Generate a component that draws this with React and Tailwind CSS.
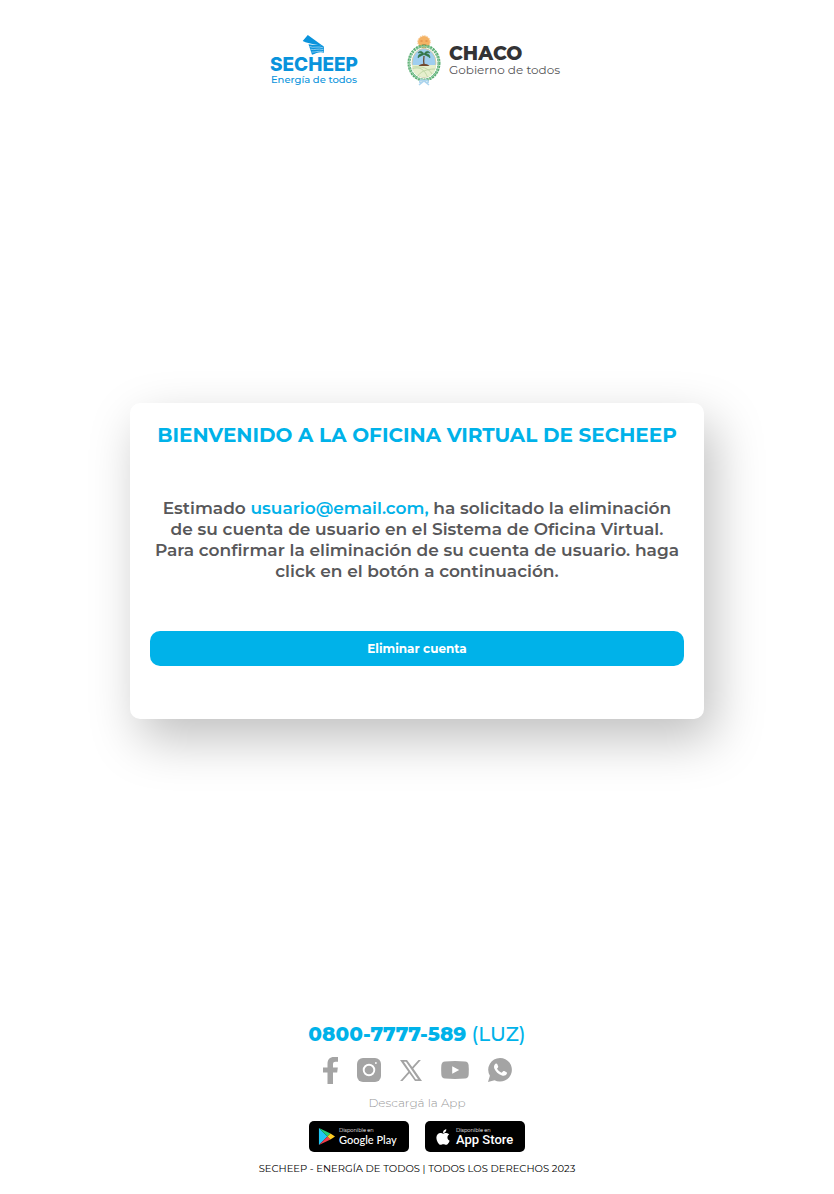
import React from "react";
import { FaApple } from "react-icons/fa";

function BirdMark() {
  return (
    <svg viewBox="0 0 24 21" className="h-[21px] w-6" aria-hidden="true">
      <path d="M.7 6 5.800 0 22 11.800C17 9 8 9.500 .7 6Z" fill="#0993dc" />
      <path d="M6.500 9.300c5 1 11-.6 15.500 2.500v6c-4-1.500-8 .5-12 2Z" fill="#0993dc" />
      <path d="M7.500 11.500c4 2 8-.8 14 1.400M8.500 14.200c4 1.300 7-1.200 13 .5M9.500 17c4 .5 6-1.600 12-.3" fill="none" stroke="#fff" strokeWidth=".5" />
    </svg>
  );
}

function ChacoShield() {
  return (
    <svg viewBox="0 0 34 52" className="h-[52px] w-[34px]" aria-hidden="true">
      <circle cx="17" cy="7" r="6" fill="#f4b264" />
      <circle cx="17" cy="7" r="6.200" fill="none" stroke="#f6bd78" strokeWidth="1" strokeDasharray="1.400 1" />
      <path d="M13.500 6h2M18.500 6h2M15.500 9.500h3" stroke="#d87b35" strokeWidth=".9" />
      <ellipse cx="17" cy="28" rx="15" ry="17" fill="none" stroke="#58ad72" strokeWidth="3" strokeDasharray="2.200 .7" />
      <ellipse cx="17" cy="28" rx="14.800" ry="16.800" fill="none" stroke="#91cda2" strokeWidth="1" />
      <ellipse cx="17" cy="28" rx="12" ry="14.500" fill="#9fceef" stroke="#d7c796" strokeWidth=".8" />
      <path d="M5 30h24c0 8-5 12.200-12 12.200S5 38 5 30Z" fill="#e6efcd" />
      <path d="M5.500 34c6-3 12 0 15 8M6 32c8-1 16 1 19 7M11 41c2-4 8-7 17-7" fill="none" stroke="#c0d8a6" strokeWidth="1" />
      <path d="M17 30c-.6-4-.4-6 0-9" fill="none" stroke="#69482d" strokeWidth="1.300" />
      <path d="M17 19c-2-4-5-3-6-1 2-.5 3 0 4 1-3-.4-4 1-4 4 2-2 4-2.500 6-3.500 2 1 4 1.500 6 3.500 0-3-1-4.400-4-4 1-1 2-1.500 4-1-1-2-4-3-6 1Z" fill="#327447" stroke="#327447" strokeWidth=".5" />
      <path d="M11.500 31c3-3 8-3 11 0Z" fill="#72492f" />
      <path d="M17 46c-3-2-5 0-4 1.500 2 .5 3-.5 4-1.500 3-2 5 0 4 1.500-2 .5-3-.5-4-1.500l-5 4M17 46l5 4" fill="none" stroke="#acd4ee" strokeWidth="1.500" />
    </svg>
  );
}

function PlayMark() {
  return (
    <svg viewBox="0 0 18 20" className="h-[19px] w-[17px] shrink-0" aria-hidden="true">
      <path d="M1 1v18l9-9Z" fill="#20c6f4" />
      <path d="m1 1 9 9 3.200-3.200Z" fill="#24d27a" />
      <path d="m1 19 9-9 3.200 3.200Z" fill="#f33c4b" />
      <path d="M13.200 6.800 18 10l-4.800 3.200L10 10Z" fill="#ffcc22" />
    </svg>
  );
}

function FacebookMark() {
  return (
    <svg viewBox="0 0 15 27" className="h-[27px] w-[15px]" aria-hidden="true">
      <path d="M4.500 27V15.500H0V10.500H4.500V7C4.500 2.500 6.800 0 11 0H15V4.700H12.500C10.800 4.700 10 5.500 10 7.200V10.500H14.800L14.200 15.500H10V27Z" fill="currentColor" />
    </svg>
  );
}

function InstagramMark() {
  return (
    <svg viewBox="0 0 24 24" className="size-6" aria-hidden="true">
      <rect width="24" height="24" rx="6" fill="currentColor" />
      <circle cx="12" cy="12" r="5.300" fill="none" stroke="#fff" strokeWidth="1.900" />
      <circle cx="18.900" cy="5" r=".9" fill="#fff" />
    </svg>
  );
}

function XMark() {
  return (
    <svg viewBox="0 0 22 21" className="h-[21px] w-[22px]" fill="currentColor" aria-hidden="true">
      <path
        fillRule="evenodd"
        d="M0 0h7l5.200 7L18.500 0h2.400l-7.600 8.500L22 21h-7l-5.600-7.700L2.500 21H.1l8.200-9.300ZM3.800 1.800l12 17.500h2.300L6 1.800Z"
      />
    </svg>
  );
}

function YoutubeMark() {
  return (
    <svg viewBox="0 0 28 18" className="h-[18px] w-7" aria-hidden="true">
      <path d="M4 .4Q14-.4 24 .4 27.300.700 27.600 4 28 9 27.600 14q-.3 3.300-3.600 3.600-10 .8-20 0Q.700 17.300.4 14 0 9 .4 4 .700.700 4 .4Z" fill="currentColor" />
      <path d="m11.200 5.200 7 3.800-7 3.800Z" fill="#fff" />
    </svg>
  );
}

function WhatsappMark() {
  return (
    <svg viewBox="0 0 24 24" className="size-6" aria-hidden="true">
      <path d="M12.200 0A11.800 11.800 0 1 1 6.500 22.200L0 24l1.900-6.300A11.800 11.800 0 0 1 12.200 0Z" fill="currentColor" />
      <path d="M7.500 5.800c.6-.6 1.300-.5 1.700.2l1 2.400c.2.600-.1 1-1.200 2.100 1 2 2.600 3.400 4.700 4.300l1.400-1.500c.3-.4.800-.4 1.200-.2l2.200 1.100c.6.300.6.700.4 1.300-.7 2-2.900 2.600-4.900 2-4-1.300-6.300-3.800-7.600-6.700-.8-1.900-.4-3.600 1.100-5Z" fill="#fff" />
    </svg>
  );
}

function StoreBadge({ name, children, className }) {
  return (
    <a href="#" className="flex h-[31px] w-[100px] items-center gap-1 rounded-[5px] bg-black pl-[9px] text-white">
      {children}
      <span className="flex flex-col whitespace-nowrap">
        <span className="text-[5px] leading-[6px]">Disponible en</span>
        <span className={className}>{name}</span>
      </span>
    </a>
  );
}

export default function App() {
  return (
    <div className="flex min-h-screen flex-col items-center justify-between bg-white font-[Montserrat,Inter,sans-serif]">
      <header className="flex items-start justify-center gap-[49px] pt-[35px] pr-1 pb-[13px]">
        <div className="flex flex-col items-center text-[#0993dc]">
          <BirdMark />
          <span className="font-[Inter] text-[19px] leading-[18px] font-extrabold">SECHEEP</span>
          <span className="text-[10px] leading-3 font-medium">Energía de todos</span>
        </div>
        <div className="flex items-start gap-2">
          <ChacoShield />
          <div className="flex flex-col pt-[9px] text-[#333335]">
            <span className="text-[19px] leading-5 font-extrabold">CHACO</span>
            <span className="text-[12px] leading-3 whitespace-nowrap text-[#555557]">Gobierno de todos</span>
          </div>
        </div>
      </header>

      <main className="w-full px-[130px]">
        <section className="flex flex-col rounded-[10px] bg-white px-5 pt-5 pb-[53px] text-center shadow-[10px_20px_50px_rgba(0,0,0,0.25)]">
          <h1 className="text-[20px] leading-6 font-bold text-[#00b2e9]">
            BIENVENIDO A LA OFICINA VIRTUAL DE SECHEEP
          </h1>
          <p className="mt-[51px] text-[17px] leading-[21px] font-semibold text-[#58585a]">
            Estimado <span className="text-[#00b2e9]">usuario@email.com,</span> ha solicitado la eliminación
            de su cuenta de usuario en el Sistema de Oficina Virtual.
            Para confirmar la eliminación de su cuenta de usuario. haga
            click en el botón a continuación.
          </p>
          <button type="button" className="mt-[49px] h-[35px] rounded-[10px] bg-[#00b2e9] text-[12px] font-bold text-white">
            Eliminar cuenta
          </button>
        </section>
      </main>

      <footer className="flex flex-col items-center pb-[19px]">
        <p className="text-[20px] leading-6 text-[#00b2e9]">
          <strong className="font-extrabold">0800-7777-589</strong> <span className="font-medium">(LUZ)</span>
        </p>
        <nav aria-label="Redes sociales" className="mt-[11px] flex h-[26px] items-center gap-[19px] text-[#a4a4a4]">
          <a href="#" aria-label="Facebook"><FacebookMark /></a>
          <a href="#" aria-label="Instagram"><InstagramMark /></a>
          <a href="#" aria-label="X"><XMark /></a>
          <a href="#" aria-label="YouTube"><YoutubeMark /></a>
          <a href="#" aria-label="WhatsApp"><WhatsappMark /></a>
        </nav>
        <p className="mt-3 text-[12px] leading-4 font-light text-[#999999]">Descargá la App</p>
        <div className="mt-[10px] flex gap-4">
          <StoreBadge name="Google Play" className="font-[Lato] text-[11px] leading-[14px] font-medium"><PlayMark /></StoreBadge>
          <StoreBadge name="App Store" className="font-[Roboto] text-[13px] leading-[14px] font-medium"><FaApple className="size-[18px] shrink-0" /></StoreBadge>
        </div>
        <p className="mt-[11px] text-[10px] leading-3 text-black">SECHEEP - ENERGÍA DE TODOS | TODOS LOS DERECHOS 2023</p>
      </footer>
    </div>
  );
}
